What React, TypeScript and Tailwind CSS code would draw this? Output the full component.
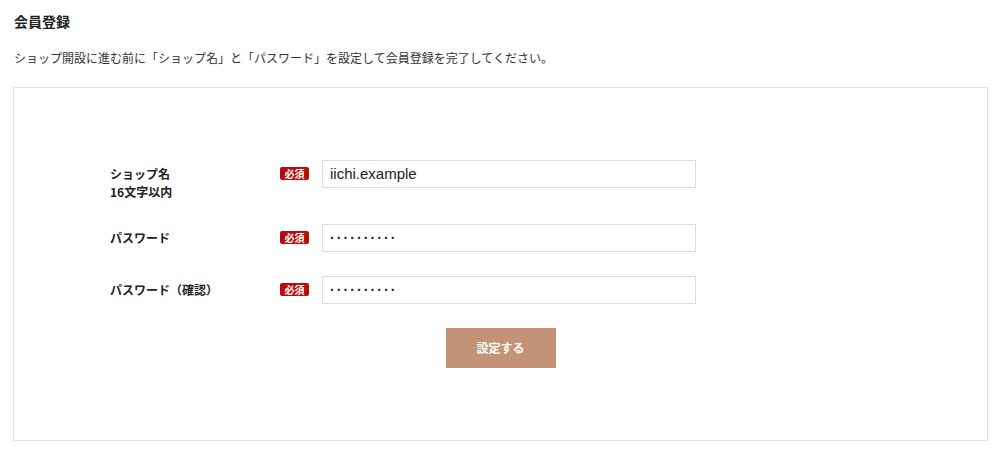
import React from "react";

const font = { fontFamily: '"Noto Sans CJK JP", "Noto Sans", sans-serif' };

function Badge() {
  return (
    <span className="mt-[7px] flex h-[13px] w-[29px] shrink-0 items-center justify-center rounded-[2px] bg-[#b80c0c] text-[10px] font-bold leading-none text-white">
      必須
    </span>
  );
}

function Row({ label, children, className = "" }: { label: React.ReactNode; children: React.ReactNode; className?: string }) {
  return (
    <div className={"flex items-start " + className}>
      <div className="w-[170px] shrink-0 pt-[5px] text-[12px] font-bold leading-[18px] text-[#222]">{label}</div>
      <Badge />
      <div
        className="ml-[13px] flex h-[28px] w-[374px] items-center border border-[#ddd] bg-white px-[7px] text-[15px] text-[#222]"
        style={{ fontFamily: '"Liberation Sans", Arial, sans-serif' }}
      >
        {children}
      </div>
    </div>
  );
}

function Dots() {
  return <span className="text-[14px] font-bold tracking-[2.1px] text-[#222]">··········</span>;
}

export default function App() {
  return (
    <div className="min-h-[455px] bg-white px-[13px] pt-[11px]" style={font}>
      <h1 className="pl-[1px] text-[14px] font-bold leading-[20px] text-[#222]">会員登録</h1>
      <p className="mt-[18px] pl-[1px] text-[12px] leading-[18px] text-[#333]">
        ショップ開設に進む前に「ショップ名」と「パスワード」を設定して会員登録を完了してください。
      </p>
      <div className="mt-[20px] w-[975px] border border-[#e2e2e2] bg-white pt-[72px] pb-[72px]">
        <div className="ml-[96px] flex flex-col">
          <Row
            label={
              <>
                ショップ名
                <br />
                16文字以内
              </>
            }
          >
            iichi.example
          </Row>
          <Row label="パスワード" className="mt-[23px]">
            <Dots />
          </Row>
          <Row label="パスワード（確認）" className="mt-[24px]">
            <Dots />
          </Row>
        </div>
        <div className="mt-[24px] flex justify-center">
          <button className="h-[40px] w-[110px] bg-[#c49276] text-[12px] font-bold text-white">設定する</button>
        </div>
      </div>
    </div>
  );
}
